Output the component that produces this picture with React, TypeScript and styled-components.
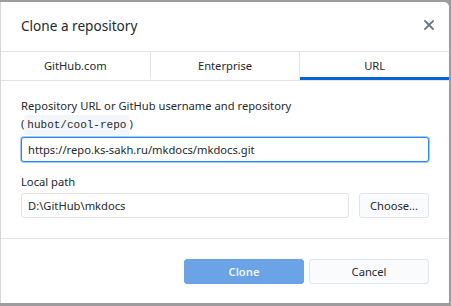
import React from 'react';
import styled, { createGlobalStyle } from 'styled-components';

const GlobalStyle = createGlobalStyle`
  html, body {
    margin: 0;
    padding: 0;
  }
  body {
    font-family: 'Noto Sans', 'Segoe UI', sans-serif;
    color: #24292e;
  }
`;

const tabs = ['GitHub.com', 'Enterprise', 'URL'];

const App: React.FC = () => {
  return (
    <>
      <GlobalStyle />
      <Backdrop>
        <Dialog>
          <Header>
            <Title>Clone a repository</Title>
            <CloseButton aria-label="Close">
              <svg width="10" height="10" viewBox="0 0 10 10">
                <path d="M1 1 L9 9 M9 1 L1 9" stroke="#6a737d" strokeWidth="1.8" strokeLinecap="square" />
              </svg>
            </CloseButton>
          </Header>
          <TabBar>
            {tabs.map((t, i) => (
              <Tab key={t} active={i === 2}>
                {t}
              </Tab>
            ))}
          </TabBar>
          <Body>
            <Label>
              Repository URL or GitHub username and repository
              <br />
              (<Code>hubot/cool-repo</Code>)
            </Label>
            <TextInput focused defaultValue="https://repo.ks-sakh.ru/mkdocs/mkdocs.git" />
            <Label spaced>Local path</Label>
            <PathRow>
              <TextInput defaultValue="D:\GitHub\mkdocs" />
              <Button>Choose...</Button>
            </PathRow>
          </Body>
          <Footer>
            <Button primary>Clone</Button>
            <Button>Cancel</Button>
          </Footer>
        </Dialog>
      </Backdrop>
    </>
  );
};

const Backdrop = styled.div`
  width: 451px;
  height: 306px;
  box-sizing: border-box;
  padding-top: 2px;
  background: #9d9d9d;
  overflow: hidden;
`;

const Dialog = styled.div`
  width: 449px;
  height: 301px;
  box-sizing: border-box;
  background: #ffffff;
  border-left: 1px solid #d6d8da;
  border-top-right-radius: 5px;
  display: flex;
  flex-direction: column;
`;

const Header = styled.div`
  height: 49px;
  display: flex;
  align-items: center;
  justify-content: space-between;
  padding: 0 14px 0 20px;
`;

const Title = styled.h1`
  margin: 0;
  font-size: 13.6px;
  font-weight: 400;
  color: #24292e;
  padding-bottom: 2px;
`;

const CloseButton = styled.button`
  border: 0;
  background: none;
  padding: 0;
  width: 12px;
  height: 12px;
  display: flex;
  align-items: center;
  justify-content: center;
  margin-bottom: 3px;
`;

const TabBar = styled.div`
  display: flex;
  border-top: 1px solid #e1e4e8;
  border-bottom: 1px solid #e1e4e8;
  height: 28px;
`;

const Tab = styled.div<{ active?: boolean }>`
  flex: 1;
  display: flex;
  align-items: center;
  justify-content: center;
  font-size: 11.2px;
  color: #24292e;
  border-right: 1px solid #e1e4e8;
  box-sizing: border-box;
  border-bottom: 3px solid ${(p) => (p.active ? '#0366d6' : 'transparent')};
  padding-top: 2px;
  &:last-child {
    border-right: 0;
  }
`;

const Body = styled.div`
  padding: 16px 20px 20px;
  display: flex;
  flex-direction: column;
  border-bottom: 1px solid #e1e4e8;
`;

const Label = styled.div<{ spaced?: boolean }>`
  font-size: 11.2px;
  line-height: 18px;
  color: #24292e;
  margin: ${(p) => (p.spaced ? '11px 0 2px' : '0 0 3px')};
`;

const Code = styled.code`
  font-family: 'Liberation Mono', 'DejaVu Sans Mono', monospace;
  font-size: 11px;
  background: #f3f6fa;
  border-radius: 3px;
  padding: 4px 3px;
`;

const TextInput = styled.input<{ focused?: boolean }>`
  flex: none;
  width: 100%;
  height: 25px;
  box-sizing: border-box;
  border: 1px solid ${(p) => (p.focused ? '#2188ff' : '#e1e4e8')};
  box-shadow: ${(p) => (p.focused ? '0 0 0 1px rgba(3,102,214,0.35)' : 'none')};
  border-radius: 3px;
  padding: 0 6px;
  font-family: inherit;
  font-size: 11.2px;
  color: #24292e;
  outline: none;
`;

const PathRow = styled.div`
  display: flex;
  gap: 10px;
  & > ${TextInput} {
    flex: 1;
    width: auto;
    min-width: 0;
  }
`;

const Button = styled.button<{ primary?: boolean }>`
  width: 70px;
  height: 25px;
  flex: none;
  box-sizing: border-box;
  border-radius: 3px;
  font-family: inherit;
  font-size: 11.2px;
  border: 1px solid ${(p) => (p.primary ? '#6aa3e6' : '#e1e4e8')};
  background: ${(p) => (p.primary ? '#6aa3e6' : '#fafbfc')};
  color: ${(p) => (p.primary ? '#f1f6fd' : '#24292e')};
  font-weight: ${(p) => (p.primary ? 600 : 400)};
  padding: 0;
`;

const Footer = styled.div`
  display: flex;
  justify-content: flex-end;
  gap: 5px;
  padding: 20px 20px 0;
  & > ${Button} {
    width: 120px;
  }
`;

export default App;
